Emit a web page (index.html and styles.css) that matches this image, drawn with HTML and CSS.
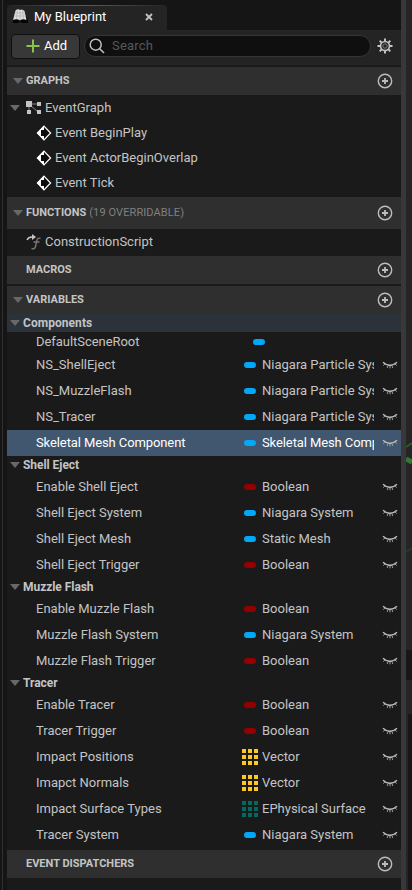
FILE: index.html
```html
<!DOCTYPE html>
<html lang="en">
<head>
<meta charset="utf-8">
<title>My Blueprint</title>
<link rel="stylesheet" href="styles.css">
</head>
<body>
<svg width="0" height="0" class="defs">
  <symbol id="tri" viewBox="0 0 10 6"><path d="M0 0H10L5 6Z" fill="#686868"/></symbol>
  <symbol id="plus" viewBox="0 0 16 16"><circle cx="8" cy="8" r="6.7" fill="none" stroke="#bdbdbd" stroke-width="1.4"/><path d="M8 5V11M5 8H11" stroke="#bdbdbd" stroke-width="1.8"/></symbol>
  <symbol id="eye" viewBox="0 0 16 8"><path d="M1 1.2Q8 7.600 15 1.2" fill="none" stroke="#bcbcbc" stroke-width="1.5"/><path d="M3 3L1.2 4.6M6 4.6L5.2 7M8 4.8V7.4M10 4.6L10.8 7M13 3L14.8 4.6" stroke="#999" stroke-width="1"/></symbol>
  <symbol id="event" viewBox="0 0 16 16"><path d="M8 1.2L14.6 8L8 14.8L1.4 8Z" fill="#111" stroke="#fff" stroke-width="1.2"/><path d="M8 1L1 8L8 15V11H5V5H8Z" fill="#fff"/><path d="M5 6H8V4.500L11.500 8L8 11.500V10H5Z" fill="#0c0c0c"/></symbol>
  <symbol id="array" viewBox="0 0 16 16"><path d="M0 0h4v4H0zM6 0h4v4H6zM12 0h4v4h-4zM0 6h4v4H0zM6 6h4v4H6zM12 6h4v4h-4zM0 12h4v4H0zM6 12h4v4H6zM12 12h4v4h-4z" fill="currentColor"/></symbol>
</svg>
<div class="window">
<div class="edge-left"></div>
<main class="panel">
  <div class="tabs"><div class="tab">
    <svg class="book" width="16" height="15" viewBox="0 0 16 15"><path d="M1 10L3 7H14L16 11V14H10L8 12.500L6 14H1Z" fill="#050505"/><path d="M3.500 1.500Q6 -.5 8 1Q10 -.5 12.500 2L14.500 11Q10.500 9.500 8 11.500Q5 9.500 1 11Z" fill="#dedede"/><path d="M8 1.500V11M5.500 1.500L4.500 10M10.500 1.500L11.500 10M3 4H13M2 7H14" stroke="#aaa" stroke-width=".6"/></svg>
    <span>My Blueprint</span>
    <svg class="close" width="8" height="8" viewBox="0 0 8 8"><path d="M1 1L7 7M7 1L1 7" stroke="#c0c0c0" stroke-width="1.9"/></svg>
  </div></div>
  <div class="toolbar">
    <div class="add"><svg width="14" height="14" viewBox="0 0 14 14"><path d="M7 .5V13.500M.5 7H13.500" stroke="#8bc24a" stroke-width="2"/></svg><span>Add</span></div>
    <div class="search"><svg width="16" height="16" viewBox="0 0 16 16"><circle cx="6.700" cy="6.700" r="5.500" fill="none" stroke="#c0c0c0" stroke-width="1.500"/><path d="M10.700 10.700L15 15" stroke="#c0c0c0" stroke-width="1.600"/></svg><span>Search</span></div>
    <svg class="gear" width="16" height="16" viewBox="0 0 16 16"><path d="M8 .5V3.500M8 12.500V15.500M.5 8H3.500M12.500 8H15.500M2.700 2.700L4.800 4.800M11.200 11.200L13.300 13.300M13.300 2.700L11.200 4.800M4.800 11.200L2.700 13.300" stroke="#c8c8c8" stroke-width="1.900"/><circle cx="8" cy="8" r="4.500" fill="none" stroke="#c0c0c0" stroke-width="1.700"/><circle cx="8" cy="8" r="2.200" fill="none" stroke="#777" stroke-width="1"/></svg>
  </div>
  <div class="head"><svg class="tri"><use href="#tri"/></svg><b>GRAPHS</b><svg class="plus"><use href="#plus"/></svg></div>
  <div class="graphs">
    <div class="node"><svg class="tri"><use href="#tri"/></svg><svg class="graph" width="15" height="13" viewBox="0 0 15 13"><path d="M4 3H12M3 3V11M4 4L12 11" stroke="#858585"/><path d="M0 0H6V6H0ZM11 1h4v4h-4zM1 9h4v4H1zM11 9h4v4h-4z" fill="#c4c4c4"/></svg><span>EventGraph</span></div>
    <div class="node child"><svg><use href="#event"/></svg><span>Event BeginPlay</span></div>
    <div class="node child"><svg><use href="#event"/></svg><span>Event ActorBeginOverlap</span></div>
    <div class="node child"><svg><use href="#event"/></svg><span>Event Tick</span></div>
  </div>
  <div class="head tall"><svg class="tri"><use href="#tri"/></svg><b>FUNCTIONS</b><i>(19 OVERRIDABLE)</i><svg class="plus"><use href="#plus"/></svg></div>
  <div class="function"><svg width="16" height="16" viewBox="0 0 16 16"><path d="M1 6Q2.500 2.500 7 3" fill="none" stroke="#c4c4c4" stroke-width="1.400"/><path d="M6 0L10 3L6 6Z" fill="#c4c4c4"/><path d="M14.500 4.500Q11.500 3 10.800 7L9.500 12.500Q8.700 15.800 5.500 14.500M7.500 8H13.500" fill="none" stroke="#777" stroke-width="1.400"/></svg><span>ConstructionScript</span></div>
  <div class="head leaf"><b>MACROS</b><svg class="plus"><use href="#plus"/></svg></div>
  <div class="head spaced"><svg class="tri"><use href="#tri"/></svg><b>VARIABLES</b><svg class="plus"><use href="#plus"/></svg></div>
  <div class="group tinted"><svg class="tri"><use href="#tri"/></svg><b>Components</b></div>
  <div class="var root"><span class="name">DefaultSceneRoot</span><span class="kind"><em class="pill blue"></em></span></div>
  <div class="var"><span class="name">NS_ShellEject</span><span class="kind"><em class="pill blue"></em></span><span class="type">Niagara Particle System</span><svg class="eye"><use href="#eye"/></svg></div>
  <div class="var"><span class="name">NS_MuzzleFlash</span><span class="kind"><em class="pill blue"></em></span><span class="type">Niagara Particle System</span><svg class="eye"><use href="#eye"/></svg></div>
  <div class="var"><span class="name">NS_Tracer</span><span class="kind"><em class="pill blue"></em></span><span class="type">Niagara Particle System</span><svg class="eye"><use href="#eye"/></svg></div>
  <div class="var selected"><span class="name">Skeletal Mesh Component</span><span class="kind"><em class="pill blue"></em></span><span class="type">Skeletal Mesh Component</span><svg class="eye"><use href="#eye"/></svg></div>
  <div class="group"><svg class="tri"><use href="#tri"/></svg><b>Shell Eject</b></div>
  <div class="var"><span class="name">Enable Shell Eject</span><span class="kind"><em class="pill red"></em></span><span class="type">Boolean</span><svg class="eye"><use href="#eye"/></svg></div>
  <div class="var"><span class="name">Shell Eject System</span><span class="kind"><em class="pill blue"></em></span><span class="type">Niagara System</span><svg class="eye"><use href="#eye"/></svg></div>
  <div class="var"><span class="name">Shell Eject Mesh</span><span class="kind"><em class="pill blue"></em></span><span class="type">Static Mesh</span><svg class="eye"><use href="#eye"/></svg></div>
  <div class="var"><span class="name">Shell Eject Trigger</span><span class="kind"><em class="pill red"></em></span><span class="type">Boolean</span><svg class="eye"><use href="#eye"/></svg></div>
  <div class="group"><svg class="tri"><use href="#tri"/></svg><b>Muzzle Flash</b></div>
  <div class="var"><span class="name">Enable Muzzle Flash</span><span class="kind"><em class="pill red"></em></span><span class="type">Boolean</span><svg class="eye"><use href="#eye"/></svg></div>
  <div class="var"><span class="name">Muzzle Flash System</span><span class="kind"><em class="pill blue"></em></span><span class="type">Niagara System</span><svg class="eye"><use href="#eye"/></svg></div>
  <div class="var"><span class="name">Muzzle Flash Trigger</span><span class="kind"><em class="pill red"></em></span><span class="type">Boolean</span><svg class="eye"><use href="#eye"/></svg></div>
  <div class="group"><svg class="tri"><use href="#tri"/></svg><b>Tracer</b></div>
  <div class="var"><span class="name">Enable Tracer</span><span class="kind"><em class="pill red"></em></span><span class="type">Boolean</span><svg class="eye"><use href="#eye"/></svg></div>
  <div class="var"><span class="name">Tracer Trigger</span><span class="kind"><em class="pill red"></em></span><span class="type">Boolean</span><svg class="eye"><use href="#eye"/></svg></div>
  <div class="var"><span class="name">Impact Positions</span><span class="kind"><svg class="array gold"><use href="#array"/></svg></span><span class="type">Vector</span><svg class="eye"><use href="#eye"/></svg></div>
  <div class="var"><span class="name">Imapct Normals</span><span class="kind"><svg class="array gold"><use href="#array"/></svg></span><span class="type">Vector</span><svg class="eye"><use href="#eye"/></svg></div>
  <div class="var"><span class="name">Impact Surface Types</span><span class="kind"><svg class="array teal"><use href="#array"/></svg></span><span class="type">EPhysical Surface</span><svg class="eye"><use href="#eye"/></svg></div>
  <div class="var"><span class="name">Tracer System</span><span class="kind"><em class="pill blue"></em></span><span class="type">Niagara System</span><svg class="eye"><use href="#eye"/></svg></div>
  <div class="head leaf spaced"><b>EVENT DISPATCHERS</b><svg class="plus"><use href="#plus"/></svg></div>
</main>
<div class="splitter"></div>
<svg class="neighbor" width="6" height="890" viewBox="0 0 6 890"><path d="M0 0H6V890H0Z" fill="#252525"/><path d="M0 447L6 443" stroke="#245b27" stroke-width="2"/><path d="M0 459L6 462" stroke="#2f7a32" stroke-width="5"/><path d="M0 552L6 548" stroke="#243b25" stroke-width="2"/><path d="M0 650H6V680H0ZM2 714H6V890H2Z" fill="#171717"/></svg>
</div>
</body>
</html>
```
FILE: styles.css
```css
* { box-sizing: border-box; }
body { margin: 0; background: #151515; color: #c4c4c4; font: 13px/16px Roboto, sans-serif; letter-spacing: 0; }
svg { display: block; flex: none; }
.defs { position: absolute; }
.window { display: flex; width: 412px; height: 890px; overflow: hidden; }
.edge-left { width: 7px; background: linear-gradient(90deg, #151515 2px, #303030 2px, #303030 3px, #151515 3px); }
.panel { width: 394px; background: #1a1a1a; white-space: nowrap; }
.splitter { width: 5px; background: #383838; }
.tabs { height: 30px; padding-top: 5px; background: #151515; }
.tab { display: flex; align-items: center; width: 160px; height: 25px; padding: 0 0 2px 5px; border-radius: 4px 4px 0 0; background: linear-gradient(90deg, #242424, #0070e0 50%, #242424) top / 100% 1px no-repeat #242424; color: #fff; }
.tab span { margin-left: 6px; width: 111px; }
.toolbar { display: flex; align-items: center; height: 35px; padding: 0 8px 3px 4px; background: #242424; }
.add { display: flex; align-items: center; gap: 4px; width: 69px; height: 25px; padding-left: 14px; border: 1px solid #0f0f0f; border-radius: 4px; background: #383838; color: #fff; }
.search { display: flex; align-items: center; gap: 7px; width: 287px; height: 22px; margin-left: 4px; padding-left: 4px; border: 1px solid #353535; border-radius: 11px; background: #0f0f0f; color: #575757; letter-spacing: .2px; }
.gear { margin-left: 6px; }
.head { display: flex; align-items: center; height: 28px; padding: 0 8px 0 6px; background: #2f2f2f; font-size: 11px; letter-spacing: 0; }
.toolbar + .head, .spaced { margin-top: 2px; }
.tall { height: 32px; }
.leaf { padding-left: 19px; }
.tri { width: 10px; height: 6px; }
.head b { margin-left: 3px; }
.leaf b { margin-left: 0; }
.head i { margin-left: 3px; font-style: normal; letter-spacing: .1px; color: #808080; }
.plus { width: 16px; height: 16px; margin-left: auto; }
.graphs { height: 102px; }
.node { display: flex; align-items: center; height: 25px; padding-left: 3px; }
.graph { margin: 0 4px 0 6px; }
.child { padding-left: 29px; }
.child svg { width: 16px; height: 16px; margin-right: 3px; }
.function { display: flex; align-items: center; gap: 3px; height: 27px; padding: 0 0 2px 19px; }
.group { display: flex; align-items: center; gap: 3px; height: 18px; padding-left: 3px; font-size: 12px; letter-spacing: -.05px; }
.tinted { background: #2b323a; letter-spacing: .05px; }
.var { display: flex; align-items: center; height: 26px; padding-left: 29px; }
.root { height: 20px; letter-spacing: -.05px; }
.name { width: 206px; }
.kind { display: flex; width: 16px; justify-content: center; margin-right: 4px; }
.root .kind { margin-left: 9px; }
.pill { width: 12px; height: 6px; border-radius: 3px; }
.blue { background: #00a8f7; }
.red { background: #940000; }
.array { width: 16px; height: 16px; }
.gold { color: #ffc724; }
.teal { color: #006960; }
.type { width: 112px; overflow: hidden; }
.eye { width: 16px; height: 8px; margin-left: 8px; }
.selected { background: #40576f; color: #fff; letter-spacing: -.1px; }
```
